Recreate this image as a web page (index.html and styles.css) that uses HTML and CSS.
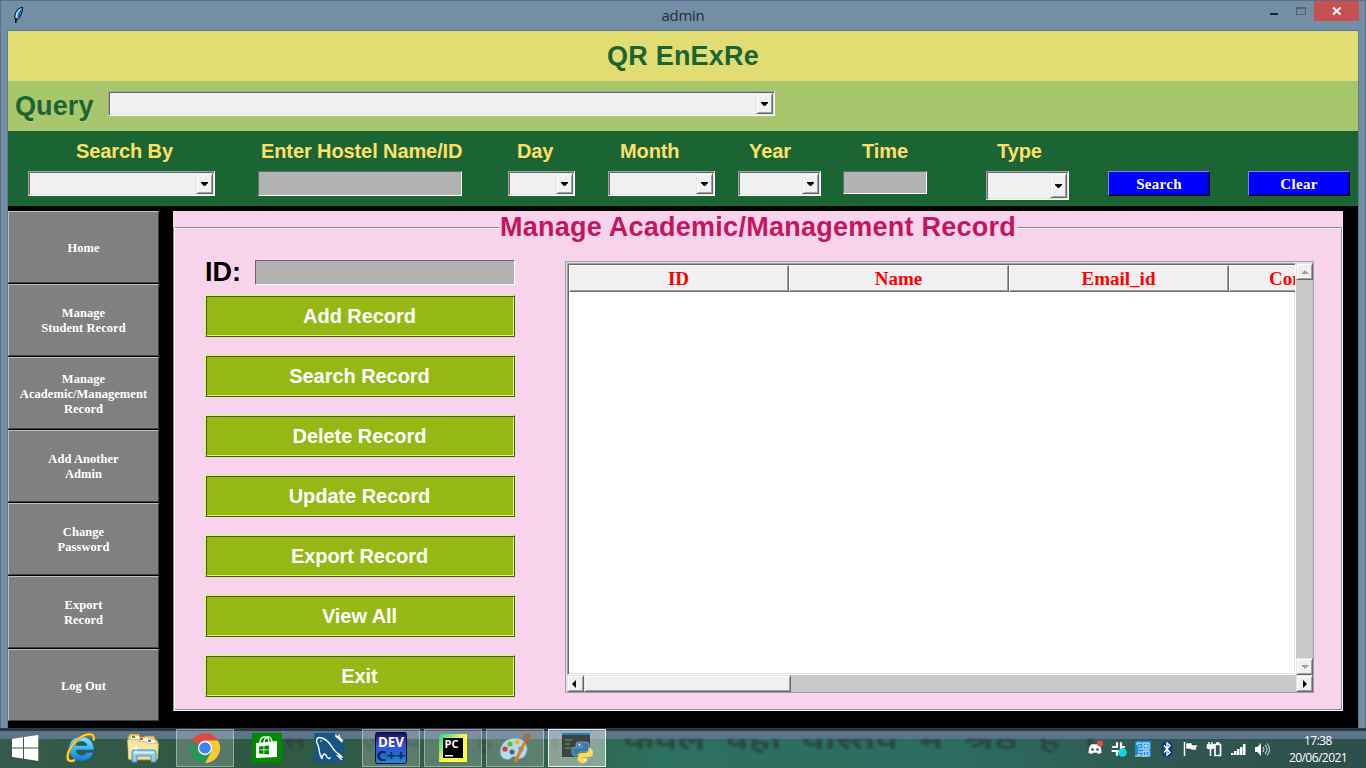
FILE: index.html
```html
<!DOCTYPE html>
<html lang="en">
<head>
<meta charset="utf-8">
<title>admin</title>
<link rel="stylesheet" href="styles.css">
</head>
<body>
<div class="window">
  <header class="titlebar">
    <svg class="feather" width="12" height="18" viewBox="0 0 12 18"><path d="M3 14 1.500 11 2.500 6.500 5 3 9.500 1 9.500 4 8 9 5.500 13Z" fill="#5ba0e6" stroke="#10161e"/><path d="M5.500 11 8.300 4" stroke="#2457a4" stroke-width="1.800"/><path d="M3.200 11.500 4 7 7.500 2.800" stroke="#e4f2ff" fill="none"/><path d="M2.800 17V12" stroke="#000" stroke-width="1.500"/></svg>
    <span class="caption">admin</span>
    <div class="controls">
      <svg width="46" height="20" viewBox="0 0 46 20" shape-rendering="crispEdges"><path fill="#222" d="M2 12h8v2H2z"/><path fill="none" stroke="#56616b" d="M28.500 7.500h9v6h-9zM28 6.500h10"/></svg>
      <div class="close"><svg width="10" height="8" viewBox="0 0 10 8"><path d="M1 .5 8.500 7.500M8.500 .5 1 7.500" stroke="#fff" stroke-width="2"/></svg></div>
    </div>
  </header>
  <main class="client">
    <h1 class="heading"><span>QR EnExRe</span></h1>
    <section class="query"><label>Query</label><div class="combo query-combo"><i class="drop"></i></div></section>
    <section class="filters">
      <div class="labels"><span>Search By</span><span>Enter Hostel Name/ID</span><span>Day</span><span>Month</span><span>Year</span><span>Time</span><span>Type</span></div>
      <div class="inputs">
        <div class="combo w187"><i class="drop"></i></div>
        <div class="entry w204"></div>
        <div class="combo w67"><i class="drop"></i></div>
        <div class="combo w107"><i class="drop"></i></div>
        <div class="combo w83"><i class="drop"></i></div>
        <div class="entry w84"></div>
        <div class="combo w83 tall"><i class="drop"></i></div>
        <button class="blue">Search</button>
        <button class="blue">Clear</button>
      </div>
    </section>
    <div class="workspace">
      <nav class="sidebar">
        <button>Home</button>
        <button>Manage<br>Student Record</button>
        <button>Manage<br>Academic/Management<br>Record</button>
        <button>Add Another<br>Admin</button>
        <button>Change<br>Password</button>
        <button>Export<br>Record</button>
        <button>Log Out</button>
      </nav>
      <section class="panel">
        <div class="legend"><i class="rule"></i><h2>Manage Academic/Management Record</h2><i class="rule"></i></div>
        <div class="frame">
          <div class="actions">
            <div class="idrow"><label>ID:</label><div class="entry id-entry"></div></div>
            <button>Add Record</button>
            <button>Search Record</button>
            <button>Delete Record</button>
            <button>Update Record</button>
            <button>Export Record</button>
            <button>View All</button>
            <button>Exit</button>
          </div>
          <div class="table">
            <div class="tree">
              <div class="thead"><span>ID</span><span>Name</span><span>Email_id</span><span class="clipped">Contact</span></div>
            </div>
            <div class="vscroll">
              <div class="sb"><i class="up"></i></div>
              <div class="sb"><i class="down"></i></div>
            </div>
            <div class="hscroll">
              <div class="sb first"><i class="left"></i></div>
              <div class="sb thumb"></div>
              <div class="sb end"><i class="right"></i></div>
            </div>
          </div>
        </div>
      </section>
    </div>
  </main>
</div>
<footer class="taskbar">
  <div class="wallpaper"><span class="w1">स ब ल व ह ह ह ।</span><span class="w2">कवल वहा वास्तव म श्रष्ठ ह ।</span></div>
  <div class="tasks">
    <div class="start"><svg width="27" height="27" viewBox="0 0 27 27"><path fill="#fff" d="M0 4 11 2.300V12.500H0zM12 2.100 26.300 0V12.500H12zM0 13.500H11V23.500L0 22zM12 13.500H26.300V26L12 23.800z"/></svg></div>
    <div class="task"><svg width="32" height="32" viewBox="0 0 32 32"><defs><linearGradient id="ie" x2="0" y2="1"><stop stop-color="#9ae8ff"/><stop offset=".5" stop-color="#39b5ef"/><stop offset="1" stop-color="#1779cb"/></linearGradient></defs><path d="M29 18H11c.3 6 8.500 7 11 2.500h6.500C24 33 4 32 4 16 4 1 29 0 29 18zM11 13.500h11c-.4-5.500-10.500-5.500-11 0z" fill="url(#ie)" stroke="#116cae" stroke-width=".7"/><path d="M28.500 8.500C31-1 19 1 11 9 1 19-1 33 10 28" fill="none" stroke="#a87508" stroke-width="3"/><path d="M28.500 8.500C31-1 19 1 11 9 1 19-1 33 10 28" fill="none" stroke="#ffd334" stroke-width="2"/></svg></div>
    <div class="task"><svg width="34" height="32" viewBox="0 0 34 32"><path d="M2 5 4 2h9l1 3h4l1-1h9l1 3 3 2-1 19H3z" fill="#e8ca72" stroke="#ad842f" stroke-width=".7"/><path d="M5 4h8v3H5zM14 6h8v3h-8zM21 8h8v3h-8z" fill="#fff"/><path d="M6 4h3v2H6z" fill="#21b52d"/><path d="M14 6h3v2h-3z" fill="#d7422d"/><path d="M22 8h3v2h-3z" fill="#238dd8"/><path d="M1.500 8h10l2 2h8l1 1.500h10L31.500 27H2.500z" fill="#f8e6a0" stroke="#d9b965" stroke-width=".5"/><path d="M6 30V20q0-2 2-2h20q2 0 2 2v10h-5v-6H11v6z" fill="#91cbea" stroke="#4a91b7"/><path d="M8 20.500h20" stroke="#d4f2ff" stroke-width="2"/><path d="M10 12v8M6 16h8" stroke="#fff" stroke-width=".8"/></svg></div>
    <div class="task open"><svg width="32" height="32" viewBox="0 0 32 32"><path d="M16 16 3.010 8.500A15 15 0 0 1 29 8.500H16z" fill="#dc4b40"/><path d="M3.010 8.500A15 15 0 0 0 16 31l6.500-11.500-13-.1z" fill="#239957"/><path d="M16 31A15 15 0 0 0 29 8.500H16l6.500 11z" fill="#fcc934"/><circle cx="16" cy="16" r="7.200" fill="#fff"/><circle cx="16" cy="16" r="5.800" fill="#3f83f3"/></svg></div>
    <div class="task"><svg width="30" height="30" viewBox="0 0 30 30"><path fill="#008a00" d="M0 0h30v30H0z"/><path d="M4 10 25 8v16L4 25z" fill="#fff"/><path d="M8 10c0-8 9-8 9-1M12 10c0-8 8-8 8-1" fill="none" stroke="#fff" stroke-width="1.300"/><path d="M7 13.500 11.500 13v3.500H7zM12.300 13 17 12.500v4h-4.700zM7 17.300h4.500V21L7 20.500zM12.300 17.300H17v4.300l-4.700-.5z" fill="#008a00"/></svg></div>
    <div class="task"><svg width="32" height="32" viewBox="0 0 32 32"><path d="M3 1h19l1 5 8 3v20q0 2-2 2H3q-2 0-2-2V3q0-2 2-2z" fill="#195581"/><path d="M9 27C5 19 7 19 5 13 2 8 4 4 9 6c9 3 9 10 14 14 2 2 5 3 6 5l-4-1 4 4M9 27c0-5 3-6 4-4 2 5 4 4 4 2" fill="none" stroke="#fff" stroke-width="1.400"/><circle cx="8" cy="9" r=".8" fill="#fff"/><path d="M25 5l4.500 4.500" stroke="#fff" stroke-width="2.500"/><path d="M22.500 2q-1 4 2 4 3 0 2-4l-1.500 2h-1z" fill="#fff"/></svg></div>
    <div class="task open"><svg width="32" height="32" viewBox="0 0 32 32"><defs><linearGradient id="dv" x2="0" y2="1"><stop stop-color="#10104e"/><stop offset=".4" stop-color="#3b4cdf"/><stop offset=".75" stop-color="#1c70c8"/><stop offset="1" stop-color="#2c8ade"/></linearGradient></defs><rect x=".5" y=".5" width="31" height="31" rx="2" fill="url(#dv)" stroke="#090b28"/><text x="3" y="14.500" textLength="26" lengthAdjust="spacingAndGlyphs" class="dev white">DEV</text><text x="1.500" y="29" textLength="29" lengthAdjust="spacingAndGlyphs" class="dev navy">C++</text></svg></div>
    <div class="task open"><svg width="28" height="28" viewBox="0 0 28 28"><defs><linearGradient id="pc" x2=".55" y2=".45"><stop stop-color="#21d789"/><stop offset=".55" stop-color="#8de77a"/><stop offset="1" stop-color="#fcf84a"/></linearGradient></defs><path fill="url(#pc)" d="M0 0h28v28H0z"/><path d="M4 4h20v20H4z"/><text x="5.500" y="14" textLength="14" lengthAdjust="spacingAndGlyphs" class="pc">PC</text><path fill="#fff" d="M6 21h8v1.500H6z"/></svg></div>
    <div class="task open"><svg width="34" height="32" viewBox="0 0 34 32"><path d="M15 6C1 7-3 26 9 28c5 0 4-4 8-3 6 6 14-2 12-11C27 7 21 5 15 6z" fill="#b4d9e8" stroke="#568ba2"/><circle cx="7" cy="17" r="2.600" fill="#d93b33"/><circle cx="12" cy="12" r="2.600" fill="#63b62f"/><circle cx="19" cy="9.500" r="2.600" fill="#efb72a"/><circle cx="14" cy="20" r="2.500" fill="#466578"/><circle cx="23" cy="17" r="2.500" fill="#3a9bd0"/><path d="M28 8 17 30" stroke="#dd7d20" stroke-width="3"/><path d="m25 8 1-6 7-1-1 6-4 4z" fill="#9c704a"/></svg></div>
    <div class="task open active"><svg width="32" height="32" viewBox="0 0 32 32"><path d="M1 1h28v24H1z" fill="#3e4247"/><path d="M1 1h28v2H1z" fill="#1682d0"/><path d="M4 8h7M4 12h5M4 16h8" stroke="#45b638" stroke-width="1.200"/><path d="M20 10h5q3 0 3 3v4q0 3-3 3h-6q-3 0-3 4h-2q-4-1-3-6 0-3 4-3h7v-1h-7v-2q0-2 3-2z" fill="#397bb0" stroke="#b8d0df" stroke-width=".5"/><path d="M28 16h1q3 1 3 6 0 3-4 3h-7v1h5v2q0 3-4 3t-5-3v-4q0-3 3-3h4q4 0 4-5z" fill="#ffdb4c" stroke="#e4ce75" stroke-width=".5"/><circle cx="18.500" cy="12.500" r="1" fill="#fff"/><circle cx="24" cy="28" r="1" fill="#fff"/></svg></div>
  </div>
  <div class="tray">
    <svg width="24" height="18" viewBox="0 0 24 18"><path d="M8 4h8l2 3 1 6-4 1.500-1-1.500h-4l-1 1.500L5 13l1-6z" fill="#fff" stroke="#28332f" stroke-width=".5"/><circle cx="9.500" cy="9.500" r="1.300" fill="#294c43"/><circle cx="14.500" cy="9.500" r="1.300" fill="#294c43"/><circle cx="17" cy="3.500" r="3" fill="#f0444c"/></svg>
    <svg width="24" height="18" viewBox="0 0 24 18"><path d="M10 3v4M6 7h4M14 3v6M17 7h-3M5.500 11H10M10 11v4M12 11h5" stroke="#fff" stroke-width="2.200" stroke-linecap="round"/><circle cx="15.500" cy="12.500" r="4.300" fill="#11d4ef"/></svg>
    <svg width="24" height="18" viewBox="0 0 24 18"><path d="M4 1h16v16H4z" fill="#168edb"/><path d="M6 5V3h5M7 6h3M7 9h4M7 12h4M6 15h4M12 3h6v6h-6zM14 5h2v2h-2zM12 11h6v5h-6zM15 11v5" fill="none" stroke="#e5f5ff"/><path d="M4 16h9" stroke="#f4c74a"/></svg>
    <svg width="24" height="18" viewBox="0 0 24 18"><rect x="6.500" y="1" width="11" height="16" rx="5" fill="#103e79"/><path d="m9 5.500 6 7-3 2.500V3l3 2.500-6 7" fill="none" stroke="#fff" stroke-width="1.300"/></svg>
    <svg width="24" height="18" viewBox="0 0 24 18"><path d="M5.500 2v14" stroke="#fff" stroke-width="1.500"/><path d="M7 3h6v2h6l-2 3 1 2h-6V9H7z" fill="#fff" stroke="#29352f" stroke-width=".5"/></svg>
    <svg width="24" height="18" viewBox="0 0 24 18"><path d="M12 4.500h5.500v11H12zM13 3h3.500" fill="none" stroke="#fff" stroke-width="1.700"/><path d="M6 2v3M9 2v3M4.500 5h6v3q-3 2-6 0zM7.500 8v8" fill="#fff" stroke="#fff" stroke-width="1.500"/></svg>
    <svg width="24" height="18" viewBox="0 0 24 18"><path d="M4 13h2.500v2H4zM7 11h2.500v4H7zM10 9h2.500v6H10zM13 7h2.500v8H13zM16 4h2.500v11H16z" fill="#fff"/></svg>
    <svg width="24" height="18" viewBox="0 0 24 18"><path d="M4 7h2.500L10 3v13l-3.500-4H4z" fill="#fff"/><path d="M12 7q2 2.500 0 5M14 5q4 4.500 0 9M16 3.500q5 6 0 12" fill="none" stroke="#dce7e4" stroke-width="1"/></svg>
  </div>
  <div class="clock"><span>17:38</span><span>20/06/2021</span></div>
</footer>
</body>
</html>
```
FILE: styles.css
```css
* { box-sizing: border-box; }
body { margin: 0; width: 1366px; height: 768px; overflow: hidden; font-family: "Liberation Sans", Arial, sans-serif; }
h1, h2 { margin: 0; font-weight: bold; }
button { margin: 0; padding: 0; font-family: inherit; white-space: nowrap; }
.window { height: 728px; background: #738fa6; border: 1px solid #5b7085; border-bottom: 0; padding: 0 7px; }
.titlebar { height: 30px; display: flex; align-items: flex-start; border-bottom: 1px solid #65798d; margin: 0 -1px; }
.feather { margin: 5px 0 0 6px; }
.caption { flex: 1; text-align: center; padding: 4px 0 0 73px; font: 15px/20px "Open Sans", sans-serif; letter-spacing: -.25px; color: #292d32; }
.controls { display: flex; }
.close { width: 45px; height: 20px; background: #c75050; display: flex; align-items: center; justify-content: center; }
.client { height: 697px; overflow: hidden; background: #000; box-shadow: 1px 0 #65798d, -1px 0 #65798d; }
.heading { height: 50px; background: #e1dd72; color: #1b6535; text-align: center; font-size: 27px; line-height: 50px; letter-spacing: .2px; }
.query { height: 50px; background: #a8c66c; padding: 10px 0 0 7px; display: flex; gap: 15px; }
.query label { width: 78px; font-weight: bold; font-size: 27px; line-height: 30px; color: #1b6535; letter-spacing: .1px; }
.combo { height: 25px; background: #f0f0f0; border: 1px solid; border-color: #a0a0a0 #fff #fff #a0a0a0; box-shadow: inset 1px 1px #696969, inset -1px -1px #e3e3e3; display: flex; justify-content: flex-end; padding: 1px; }
.query-combo { width: 667px; }
.drop { width: 17px; border: 1px solid; border-color: #e3e3e3 #696969 #696969 #e3e3e3; box-shadow: inset 1px 1px #fff, inset -1px -1px #a0a0a0; display: flex; align-items: center; justify-content: center; padding-top: 1px; }
.drop::after { content: ""; width: 7px; height: 4px; background: #000; clip-path: polygon(0 0, 100% 0, 100% 25%, 57% 100%, 43% 100%, 0 25%); }
.filters { height: 75px; background: #1b6535; color: #ffe067; }
.labels { height: 40px; padding-left: 68px; display: grid; grid-template-columns: 185px 256px 103px 129px 113px 135px auto; font-weight: bold; font-size: 20px; line-height: 40px; letter-spacing: -.1px; white-space: nowrap; }
.inputs { padding-left: 20px; display: grid; grid-template-columns: 230px 250px 100px 130px 105px 143px 122px 140px 102px; align-items: start; }
.entry { height: 25px; background: #b2b2b2; border: 1px solid; border-color: #696969 #fff #fff #696969; }
.w187 { width: 187px; } .w204 { width: 204px; } .w67 { width: 67px; } .w107 { width: 107px; } .w83 { width: 83px; } .w84 { width: 84px; height: 23px; }
.tall { height: 29px; }
.blue { width: 102px; height: 25px; background: #00f; color: #fff; border: 1px solid; border-color: #8080ff #000 #000 #8080ff; box-shadow: inset -1px -1px #0000a0; font: bold 15px/22px "Liberation Serif", serif; letter-spacing: .3px; }
.workspace { display: flex; gap: 14px; padding-top: 5px; }
.sidebar { width: 151px; display: grid; grid-auto-rows: 72px; gap: 1px; }
.sidebar button { background: #808080; color: #fff; border: 1px solid; border-color: #bfbfbf #404040 #404040 #bfbfbf; padding-top: 2px; font: bold 12.5px/15px "Liberation Serif", serif; letter-spacing: .05px; }
.panel { width: 1170px; height: 500px; background: #f7d4eb; display: flex; flex-direction: column; }
.legend { height: 34px; display: flex; align-items: flex-start; margin-bottom: -18px; }
.legend h2 { width: 518px; text-align: center; font-size: 27px; line-height: 33px; letter-spacing: .25px; color: #c4155f; white-space: nowrap; }
.rule { flex: none; width: 326px; height: 2px; margin-top: 16px; background: linear-gradient(#978391 50%, #fff 50%); }
.frame { flex: 1; border-left: 1px solid #978391; border-right: 1px solid #fff; border-bottom: 1px solid #fff; box-shadow: inset 1px 0 #fff, inset -1px -1px #978391; display: flex; gap: 50px; padding: 32px 28px 0 31px; }
.actions { width: 310px; display: flex; flex-direction: column; gap: 18px; }
.idrow { display: flex; height: 36px; margin-bottom: -18px; }
.idrow label { width: 50px; font-weight: bold; font-size: 27px; line-height: 27px; }
.id-entry { width: 260px; margin-top: 1px; }
.actions button { height: 42px; background: #95b814; color: #fff; font-weight: bold; font-size: 20px; line-height: 38px; letter-spacing: -.05px; padding-right: 1px; border: 1px solid; border-color: #d0ff68 #4b5c0a #4b5c0a #d0ff68; box-shadow: inset 1px 1px #4b5c0a, inset -1px -1px #d0ff68; }
.table { width: 749px; height: 432px; margin-top: 2px; background: #e3e3e3; border: 1px solid #a0a0a0; padding: 1px 0 0 1px; display: grid; grid-template-columns: 729px 17px; grid-template-rows: 412px 17px; }
.tree { background: #fff; border: 1px solid; border-color: #a0a0a0 #fff #fff #a0a0a0; box-shadow: inset 1px 1px #696969, inset -1px -1px #e3e3e3; padding: 1px 0 0 1px; overflow: hidden; }
.thead { display: flex; color: #f00; font: bold 19px/25px "Liberation Serif", serif; }
.thead span { flex: 0 0 220px; height: 27px; text-align: center; background: #f0f0f0; border: 1px solid; border-color: #fff #696969 #696969 #fff; box-shadow: inset -1px -1px #a0a0a0; padding-right: 1px; }
.thead .clipped { text-align: left; padding-left: 39px; }
.vscroll { background: #c8c8c8; display: flex; flex-direction: column; justify-content: space-between; }
.hscroll { grid-column: 1 / 3; background: #c8c8c8; display: flex; }
.sb { width: 17px; height: 17px; background: #f0f0f0; border: 1px solid; border-color: #e3e3e3 #696969 #696969 #e3e3e3; box-shadow: inset 1px 1px #fff, inset -1px -1px #a0a0a0; display: flex; align-items: center; justify-content: center; }
.first { padding-right: 3px; }
.thumb { width: 207px; }
.end { margin-left: auto; }
.sb i { border: 4px solid transparent; }
.sb .up { border-top: 0; border-bottom-color: #a0a0a0; }
.sb .down { border-bottom: 0; border-top-color: #a0a0a0; }
.sb .left { border-left: 0; border-right-color: #000; }
.sb .right { border-right: 0; border-left-color: #000; }
.taskbar { position: relative; height: 40px; display: flex; background: linear-gradient(#2c3946 0 3px, #5c748a 3px 11px, transparent 11px), linear-gradient(90deg, #355b4c, #2e5841 18%, #34614a 40%, #2c705e 48%, #2d6d60 70%, #2f5850 85%, #2e4f4a); }
.wallpaper { position: absolute; inset: 11px 0 0; overflow: hidden; color: #27443c; font: bold 29px/32px "Noto Sans Devanagari", "Noto Sans", sans-serif; filter: blur(1px); white-space: nowrap; opacity: .8; }
.w1, .w2 { position: absolute; top: -13px; transform-origin: 0 0; }
.w1 { left: 284px; word-spacing: 12px; }
.w2 { left: 623px; word-spacing: 8px; transform: scaleX(1.31); }
.tasks { position: relative; display: flex; gap: 4px; width: 1083px; padding-top: 1px; }
.start { width: 48px; display: flex; padding: 6px 0 0 12px; }
.task { width: 58px; height: 38px; display: flex; align-items: center; justify-content: center; border: 1px solid transparent; }
.open { background: rgba(255,255,255,.2); border-color: rgba(255,255,255,.38); }
.active { background: rgba(255,255,255,.42); border-color: #e6eeea; }
.dev { font: bold 14px "Open Sans", sans-serif; }
.white { fill: #fff; } .navy { fill: #0b2356; }
.pc { font: bold 10px "Open Sans", sans-serif; fill: #fff; }
.tray { position: relative; display: flex; padding-top: 12px; width: 192px; }
.clock { position: relative; width: 87px; display: flex; flex-direction: column; align-items: center; padding: 4px 1px 0 0; color: #fff; font: 12px/17px "Open Sans", sans-serif; letter-spacing: -.55px; }
```
